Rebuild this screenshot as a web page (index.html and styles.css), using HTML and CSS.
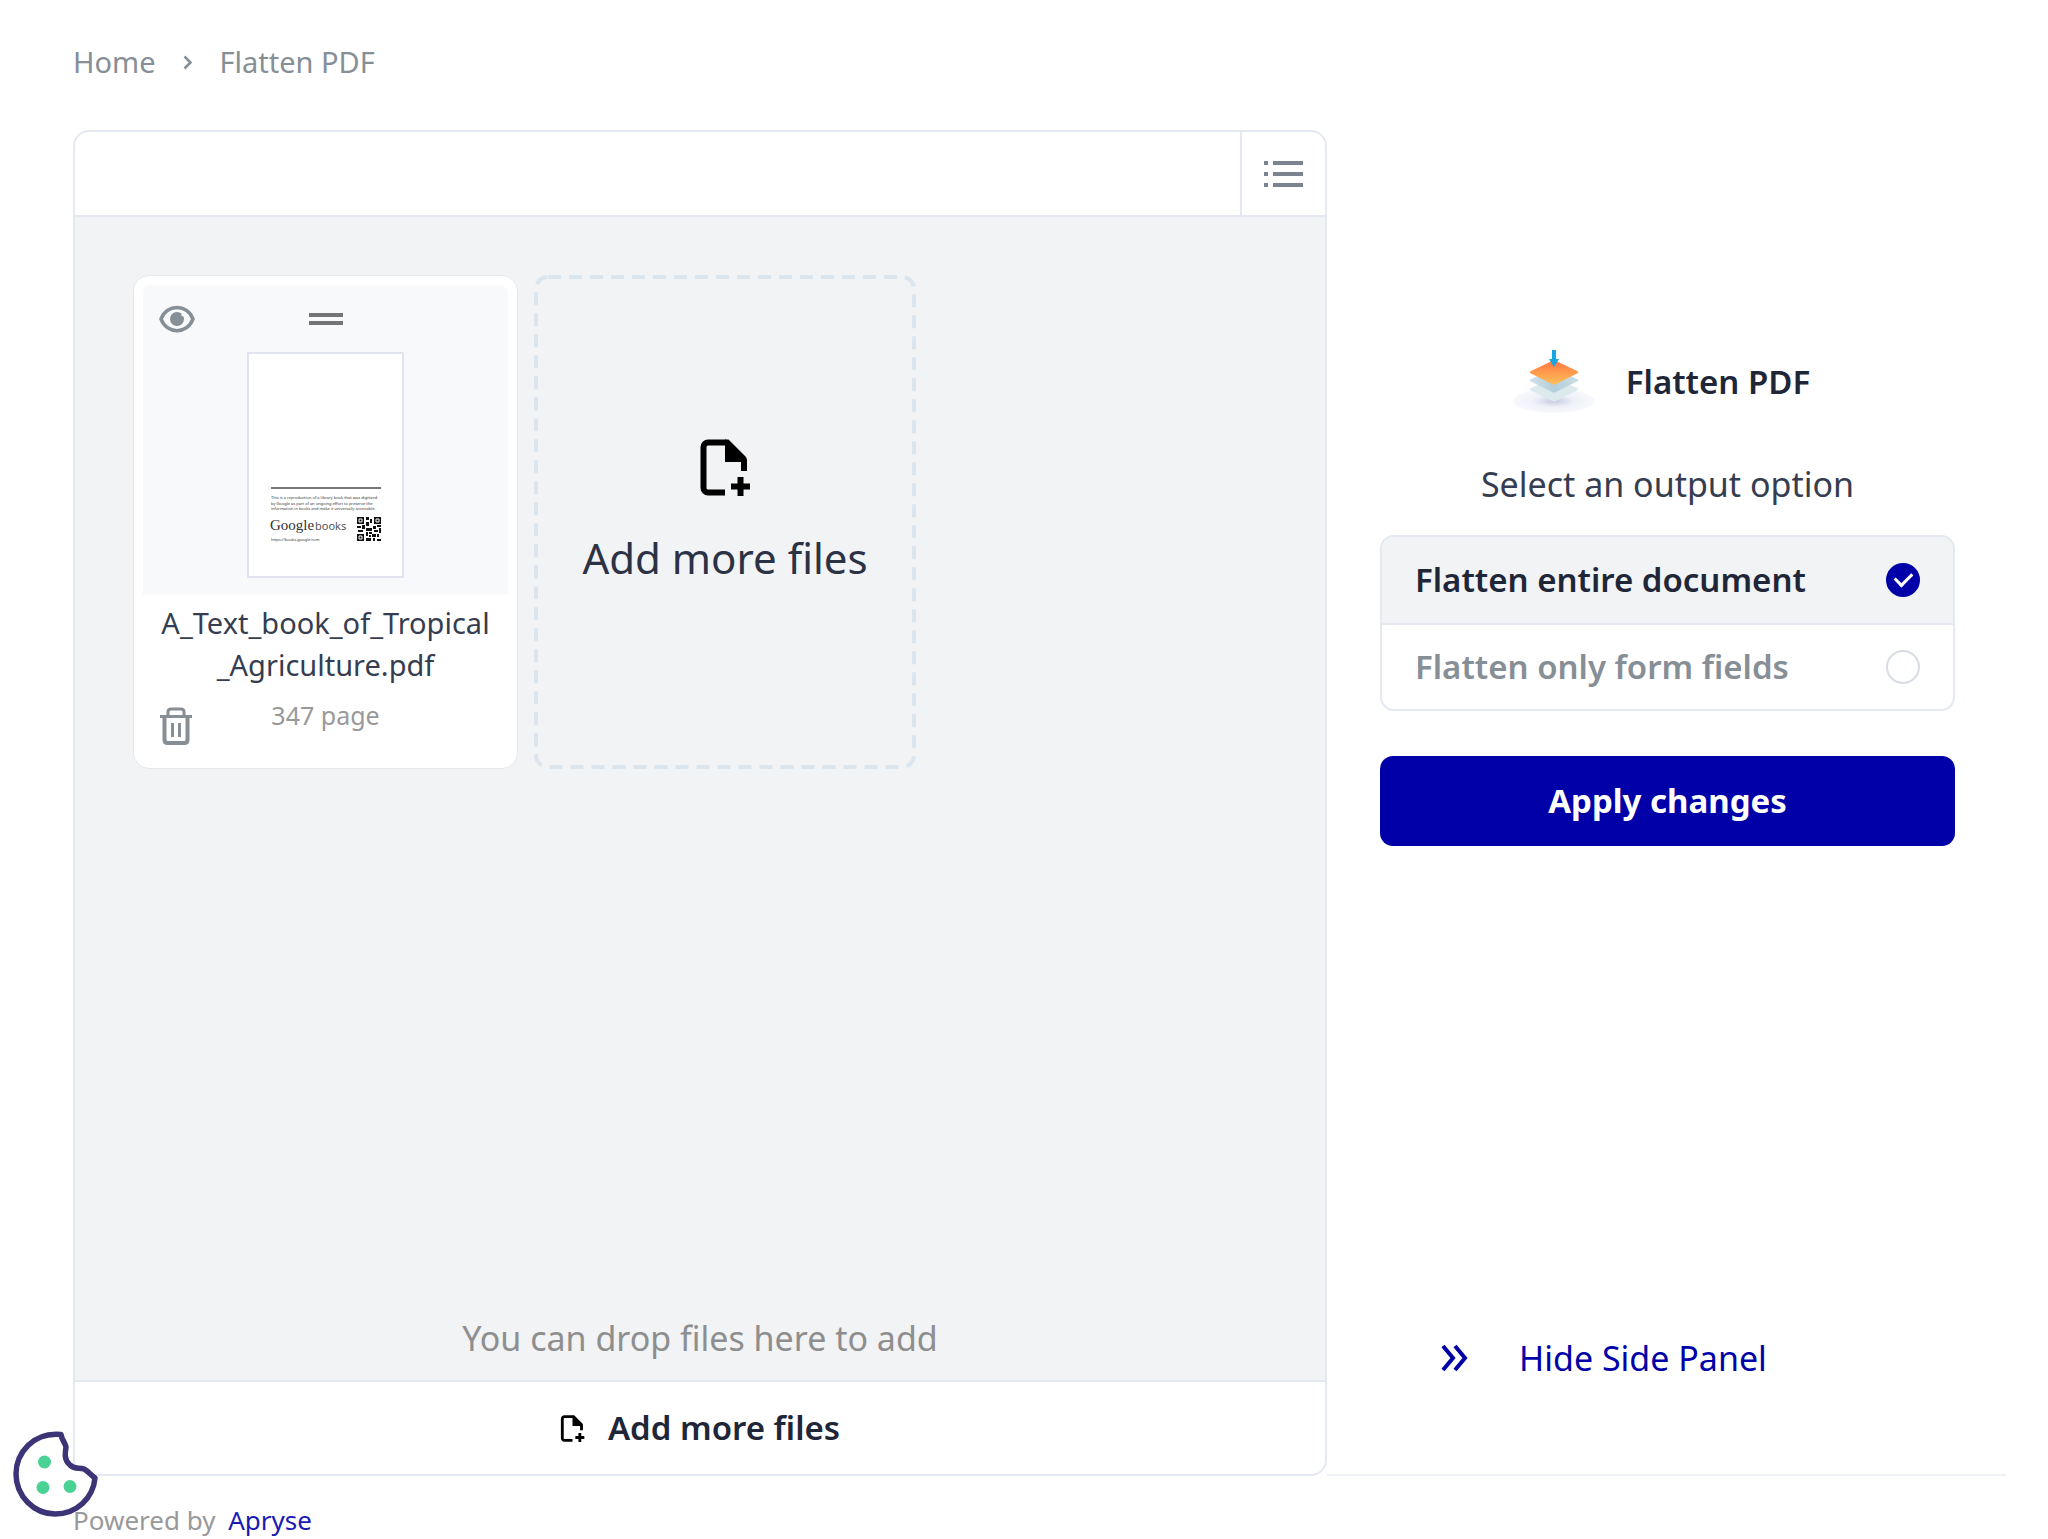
FILE: index.html
```html
<!DOCTYPE html>
<html lang="en">
<head>
<meta charset="utf-8">
<meta name="viewport" content="width=device-width, initial-scale=1">
<title>Flatten PDF</title>
<link rel="stylesheet" href="styles.css">
</head>
<body>
<svg class="defs" width="0" height="0" aria-hidden="true">
	<symbol id="file-plus" viewBox="0 0 50 57">
		<path d="M25 53.500H8a4.500 4.500 0 0 1-4.500-4.500V8A4.500 4.500 0 0 1 8 3.500h18" fill="none" stroke="#000" stroke-width="6"/>
		<path d="M25 0.500h3.500L45.500 17.500Q47 19 47 21v11h-6v-9H25z"/>
		<path d="M37.500 38h6v6.500H50v6h-6.500V57h-6v-6.500H31v-6h6.500z"/>
	</symbol>
</svg>
<nav class="breadcrumb" aria-label="Breadcrumb">
	<a href="#">Home</a>
	<svg width="10" height="15" viewBox="0 0 10 15"><path d="M1.500 1.500l6 6-6 6" fill="none" stroke="#868e96" stroke-width="2.500"/></svg>
	<a href="#">Flatten PDF</a>
</nav>
<main class="main">
	<section class="panel">
		<div class="toolbar">
			<button type="button" class="btn-list" aria-label="List view">
				<svg width="39" height="28" viewBox="0 0 39 28" fill="#7b848e">
					<path d="M0 1h4v4H0zM9 1h30v4H9zM0 12h4v4H0zM9 12h30v4H9zM0 23h4v4H0zM9 23h30v4H9z"/>
				</svg>
			</button>
		</div>
		<div class="files">
			<div class="file-list">
				<article class="file-card">
					<div class="preview">
						<div class="card-row">
							<button type="button" class="btn-icon" aria-label="Preview">
								<svg width="36" height="28" viewBox="0 0 36 28">
									<path d="M2 14C8-1.500 28-1.500 34 14 28 29.500 8 29.500 2 14z" fill="none" stroke="#868e96" stroke-width="3.500"/>
									<path d="M18 7q3 0 4.500 1.500-1 3 2 3Q25 13 25 14a7 7 0 1 1-7-7z" fill="#868e96"/>
								</svg>
							</button>
							<svg class="drag" width="34" height="14" viewBox="0 0 34 14"><path d="M0 1h34v4H0zM0 9h34v4H0z" fill="#757575"/></svg>
						</div>
						<svg class="thumb" width="157" height="226" viewBox="-2 -2 157 226">
							<rect x="-1" y="-1" width="155" height="224" fill="#fff" stroke="#e2e3f0" stroke-width="2"/>
							<path d="M22 134h110" stroke="#777" stroke-width="2"/>
							<g font-family="Noto Sans, sans-serif" font-size="4" fill="#333">
								<text x="22" y="145">This is a reproduction of a library book that was digitized</text>
								<text x="22" y="151">by Google as part of an ongoing effort to preserve the</text>
								<text x="22" y="156">information in books and make it universally accessible.</text>
								<text x="22" y="187">https://books.google.com</text>
							</g>
							<text x="21" y="176" font-family="Liberation Serif, serif" font-size="15" fill="#333">Google</text>
							<text x="66" y="176" font-family="Noto Sans, sans-serif" font-size="11" fill="#555">books</text>
							<path transform="translate(108 163)" d="M0 0h7v7H0zM17 0h7v7h-7zM0 17h7v7H0zM9 0h3v3H9zM13 2h2v4h-2zM9 5h3v4H9zM0 9h4v2H0zM5 8h3v4H5zM9 11h6v3H9zM16 9h3v3h-3zM20 8h4v2h-4zM22 11h2v5h-2zM17 13h4v2h-4zM1 13h5v2H1zM9 15h2v4H9zM12 15h3v2h-3zM15 17h4v3h-4zM20 17h2v3h-2zM9 21h5v3H9zM12 18h2v2h-2zM16 21h2v3h-2zM20 22h4v2h-4z" fill="#111"/>
							<path transform="translate(108 163)" d="M2 2h3v3H2zM19 2h3v3h-3zM2 19h3v3H2z" fill="none" stroke="#fff"/>
						</svg>
					</div>
					<p class="file-name">A_Text_book_of_Tropical<wbr>_Agriculture.pdf</p>
					<div class="card-row card-foot">
						<button type="button" class="btn-icon" aria-label="Delete">
							<svg width="34" height="38" viewBox="0 0 34 38" fill="none" stroke="#868e96" stroke-width="3">
								<path d="M1 9.500h32M9 9V5q0-3 3-3h10q3 0 3 3v4" />
								<path d="M5.500 9.500V33q0 3 3 3h17q3 0 3-3V9.500" stroke-width="4"/>
								<path d="M13.500 16v14M20.500 16v14"/>
							</svg>
						</button>
						<span class="pages">347 page</span>
					</div>
				</article>
				<button type="button" class="add-tile">
					<svg class="dashes" width="100%" height="100%" aria-hidden="true"><rect class="dash-line" x="2" y="2" rx="12"/></svg>
					<svg width="50" height="57"><use href="#file-plus"/></svg>
					<span>Add more files</span>
				</button>
			</div>
			<p class="drop-hint">You can drop files here to add</p>
		</div>
		<button type="button" class="add-bar">
			<svg width="25" height="27"><use href="#file-plus"/></svg>
			<span>Add more files</span>
		</button>
	</section>
	<aside class="side">
		<h1 class="side-title">
			<svg width="82" height="64" viewBox="0 0 82 64">
				<defs>
					<radialGradient id="shadow"><stop offset="0" stop-color="#c6cae0"/><stop offset=".5" stop-color="#eff1f8"/><stop offset="1" stop-color="#f8f9fd"/></radialGradient>
					<linearGradient id="orange" x2="0" y2="1"><stop offset="0" stop-color="#ff7541"/><stop offset="1" stop-color="#ffc05a"/></linearGradient>
					<linearGradient id="layer" x2="1" y2="0"><stop offset="0" stop-color="#d0e2e9"/><stop offset=".5" stop-color="#b4cfdb"/><stop offset="1" stop-color="#cbdee5"/></linearGradient>
				</defs>
				<ellipse cx="41" cy="51" rx="41" ry="12" fill="url(#shadow)"/>
				<path d="M17 40q-1-1 1-2l23-10 23 10q2 1 1 2L43 51q-2 1-4 0z" fill="#dceaee"/>
				<path d="M17 31q-1-1 1-2l23-10 23 10q2 1 1 2L43 42q-2 1-4 0z" fill="url(#layer)"/>
				<path d="M17 23q-1-1 1-2l21-10q2-1 4 0l21 10q2 1 1 2L43 34q-2 1-4 0z" fill="url(#orange)"/>
				<path d="M39 0h4v9h3l-5 8-5-8h3z" fill="#16a6e0"/>
			</svg>
			<span>Flatten PDF</span>
		</h1>
		<form class="form">
			<fieldset class="options">
				<legend>Select an output option</legend>
				<div class="option-box">
					<label class="option"><span>Flatten entire document</span><input type="radio" name="output" value="all" checked></label>
					<label class="option"><span>Flatten only form fields</span><input type="radio" name="output" value="fields"></label>
				</div>
			</fieldset>
			<button type="button" class="btn-apply">Apply changes</button>
		</form>
		<button type="button" class="btn-hide">
			<svg width="28" height="28" viewBox="0 0 28 28"><path d="M2 2l10 12L2 26M14 2l10 12-10 12" fill="none" stroke="#0000a8" stroke-width="4"/></svg>
			<span>Hide Side Panel</span>
		</button>
	</aside>
</main>
<footer class="footer">Powered by <a href="#">Apryse</a></footer>
<button type="button" class="cookie" aria-label="Cookie settings">
	<svg width="86" height="86" viewBox="0 0 86 86">
		<path d="M48 3.500C20 1 3 22 3 43c0 22 18 40 39 40 22 0 38-16 40-36-4-3-7-7-11-9-5-2-9 1-14-4-6-5-5-11-4-18-1-5-4-6-5-12.500z" fill="#fff" stroke="#3b3577" stroke-width="5.500" stroke-linejoin="round"/>
		<g fill="#4ad295"><circle cx="31.500" cy="31" r="6.500"/><circle cx="30" cy="56.500" r="6.500"/><circle cx="57" cy="55.500" r="6.500"/></g>
	</svg>
</button>
</body>
</html>
```
FILE: styles.css
```css
*{margin: 0;padding: 0;box-sizing: border-box;}
body{font: 34px/44px "Noto Sans",sans-serif;color: #1f2637;background-color: #fff;min-height: 100vh;display: flex;flex-direction: column;}
button{font: inherit;color: inherit;background: none;border: 0;cursor: pointer;}
svg{display: block;flex: none;}
a{color: inherit;text-decoration: none;}
a:hover{text-decoration: underline;}
.defs{position: absolute;}
.breadcrumb{display: flex;align-items: center;gap: 27px;padding: 40px 73px 46px;font-size: 29px;color: #868e96;}
.main{flex: 1;display: grid;grid-template-columns: minmax(0,1fr) 679px;padding: 0 42px 0 73px;}

/* file panel */
.panel{display: flex;flex-direction: column;border: 2px solid #e4e8f1;border-radius: 16px;overflow: hidden;}
.toolbar{display: flex;justify-content: flex-end;height: 85px;border-bottom: 2px solid #e4e8f1;}
.btn-list{display: flex;align-items: center;justify-content: center;width: 85px;border-left: 2px solid #e4e8f1;}
.files{flex: 1;display: flex;flex-direction: column;justify-content: space-between;padding: 58px 58px 20px;background-color: #f1f3f5;}
.file-list{display: flex;flex-wrap: wrap;gap: 16px;}
.file-card,.add-tile{min-height: 494px;border-radius: 16px;}
.file-card{width: 385px;padding: 9px;background-color: #fff;border: 1px solid #e6e8ea;text-align: center;}
.preview{height: 310px;padding-top: 20px;background-color: #f8f9fb;border-radius: 8px 8px 0 0;}
.card-row{display: grid;grid-template-columns: 50px 1fr 50px;padding: 0 16px;}
.preview .card-row{align-items: center;height: 28px;}
.drag,.thumb{margin: 0 auto;}
.thumb{margin-top: 19px;}
.file-name{padding-top: 7px;font-size: 29px;line-height: 42px;color: #363d50;}
.card-foot{padding-top: 8px;}
.card-foot .btn-icon{padding-top: 13px;}
.pages{font-size: 25px;line-height: 42px;color: #999;}
.add-tile{width: 382px;position: relative;display: flex;flex-direction: column;align-items: center;justify-content: center;gap: 32px;padding-bottom: 18px;font-size: 42px;line-height: 60px;color: #2b3245;}
.dashes{position: absolute;top: 0;left: 0;}
.dash-line{width: calc(100% - 4px);height: calc(100% - 4px);fill: none;stroke: #dbe5ee;stroke-width: 4px;stroke-dasharray: 13 8;}
.drop-hint{text-align: center;color: #8e8e8e;}
.add-bar{display: flex;align-items: center;justify-content: center;gap: 23px;height: 94px;border-top: 2px solid #e4e8f1;font-size: 33px;font-weight: 600;}

/* side panel */
.side{display: flex;flex-direction: column;padding: 220px 51px 94px 53px;border-bottom: 2px solid #eff2f7;}
.side-title{display: flex;align-items: center;justify-content: center;gap: 31px;height: 64px;padding-right: 12px;font-size: 33px;font-weight: 600;}
.options{border: 0;}
.options legend{width: 100%;padding: 48px 0 29px;text-align: center;color: #363d50;}
.option-box{border: 2px solid #e4e8f1;border-radius: 14px;overflow: hidden;}
.option{display: flex;align-items: center;justify-content: space-between;height: 86px;padding: 0 33px;font-size: 33px;font-weight: 600;color: #868e96;cursor: pointer;}
.option + .option{border-top: 2px solid #e4e8f1;}
.option:has(input:checked){background-color: #f1f3f5;color: #1f2637;}
.option input{appearance: none;display: grid;place-items: center;width: 34px;height: 34px;border: 2px solid #d8dce4;border-radius: 50%;background-color: #fff;}
.option input:checked{background-color: #0000a8;border-color: #0000a8;}
.option input:checked:after{content: "";width: 14px;height: 8px;margin-bottom: 5px;border: solid #fff;border-width: 0 0 3px 3px;transform: rotate(-45deg);}
.btn-apply{width: 100%;height: 90px;margin-top: 45px;background-color: #0000a8;color: #fff;border-radius: 13px;font-size: 33px;font-weight: 700;}
.btn-apply:hover{opacity: 0.9;}
.btn-hide{display: flex;align-items: center;gap: 50px;margin-top: auto;padding-left: 61px;color: #0000a8;}

.footer{padding: 25px 73px 0;font-size: 26px;line-height: 38px;color: #999;}
.footer a{margin-left: 6px;color: #1a1ab4;}
.cookie{position: fixed;left: 13px;bottom: 22px;}
```
